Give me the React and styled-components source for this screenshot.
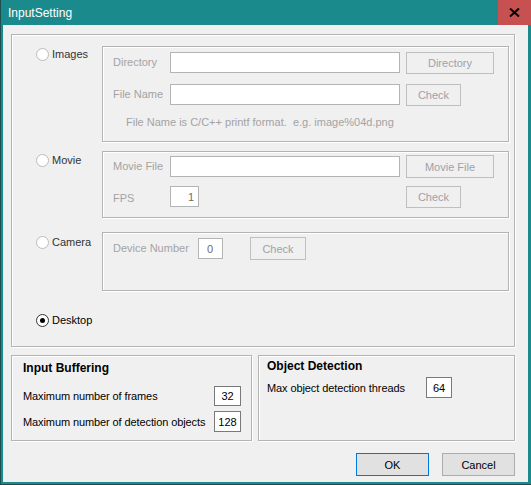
import styled, { createGlobalStyle } from 'styled-components';

const GlobalStyle = createGlobalStyle`
  html, body {
    margin: 0;
    padding: 0;
    background: #f0f0f0;
  }
  body {
    font-family: "Liberation Sans", Arial, sans-serif;
    font-size: 11px;
  }
`;

const Window = styled.div`
  width: 531px;
  height: 485px;
  box-sizing: border-box;
  background: #1b8a8c;
  border-left: 1px solid #1e4f50;
  border-bottom: 1px solid #1e4f50;
  padding: 0 3px 2px 2px;
  display: flex;
  flex-direction: column;
`;

const TitleBar = styled.div`
  height: 25px;
  flex: none;
  display: flex;
  align-items: center;
  justify-content: space-between;
  color: #fff;
  font-size: 12px;
  padding-left: 5px;
  margin-right: -3px;
`;

const CloseButton = styled.div`
  width: 33px;
  height: 25px;
  background: #c75050;
  display: flex;
  align-items: center;
  justify-content: center;
`;

const Body = styled.div`
  flex: 1;
  background: #f0f0f0;
  padding: 9px 13px 0 8px;
  display: flex;
  flex-direction: column;
`;

/* etched group frame, as drawn by the Win32 group box */
const Frame = styled.div`
  box-sizing: border-box;
  border: 1px solid #b4b4b4;
  box-shadow: inset 1px 1px 0 #fff, 1px 1px 0 #fff;
`;

const SourceFrame = styled(Frame)`
  height: 313px;
  padding-bottom: 18px;
  display: flex;
  flex-direction: column;
`;

const SourceRow = styled.div`
  display: flex;
  margin-top: ${(p) => p.$gap}px;
  padding-right: 5px;
`;

const RadioLabel = styled.label`
  width: 90px;
  flex: none;
  box-sizing: border-box;
  padding-left: 24px;
  padding-top: ${(p) => p.$top || 0}px;
  display: flex;
  align-items: flex-start;
  gap: 3px;
  color: ${(p) => (p.$checked ? '#000' : '#333')};
  line-height: 13px;
`;

const RadioDot = styled.span`
  width: 11px;
  height: 11px;
  flex: none;
  border-radius: 50%;
  background: #fff;
  border: 1px solid ${(p) => (p.$checked ? '#333' : '#bcbcbc')};
  display: flex;
  align-items: center;
  justify-content: center;

  &::after {
    content: '';
    width: 5px;
    height: 5px;
    border-radius: 50%;
    background: ${(p) => (p.$checked ? '#000' : 'transparent')};
  }
`;

const SubFrame = styled(Frame)`
  flex: 1;
  height: ${(p) => p.$height}px;
  padding: ${(p) => p.$pad || '4px 0 0 10px'};
  display: flex;
  flex-direction: column;
  gap: ${(p) => p.$gap || 9}px;
`;

const FieldRow = styled.div`
  display: flex;
  align-items: center;
  height: 23px;
`;

const FieldLabel = styled.span`
  width: ${(p) => p.$width || 57}px;
  flex: none;
  color: #a3a3a3;
  padding-top: ${(p) => p.$drop || 0}px;
  margin-top: -1px;
`;

const TextBox = styled.input`
  box-sizing: border-box;
  width: ${(p) => p.$width}px;
  height: ${(p) => p.$height || 21}px;
  margin: 0 ${(p) => p.$after || 0}px 0 0;
  padding: 0 ${(p) => p.$pad ?? 4}px;
  border: 1px solid ${(p) => (p.disabled ? '#b4b4b4' : '#7a7a7a')};
  background: #fff;
  font: inherit;
  color: ${(p) => (p.disabled ? '#6d6d6d' : '#000')};
  text-align: ${(p) => p.$align || 'left'};
  outline: none;
  flex: none;
`;

const PushButton = styled.button`
  box-sizing: border-box;
  width: ${(p) => p.$width}px;
  height: ${(p) => p.$height || 23}px;
  padding: 0;
  font: inherit;
  flex: none;
  border: 1px solid ${(p) => (p.disabled ? '#bfbfbf' : p.$primary ? '#0078d7' : '#adadad')};
  background: ${(p) => (p.disabled ? '#f0f0f0' : '#e1e1e1')};
  color: ${(p) => (p.disabled ? '#a0a0a8' : '#000')};
`;

const Note = styled.div`
  padding-left: 13px;
  margin-top: 1px;
  color: #a3a3a3;
`;

const BottomGroups = styled.div`
  display: flex;
  gap: 6px;
  margin-top: 8px;
  height: 86px;
`;

const OptionFrame = styled(Frame)`
  width: ${(p) => p.$width}px;
  padding: ${(p) => p.$pad};
  display: flex;
  flex-direction: column;
`;

const GroupTitle = styled.div`
  font-weight: bold;
  font-size: 12px;
  color: #000;
  height: 16px;
  margin-bottom: ${(p) => p.$space}px;
`;

const OptionRow = styled.div`
  display: flex;
  align-items: center;
  justify-content: ${(p) => (p.$spread ? 'space-between' : 'flex-start')};
  height: 21px;
  margin-bottom: 5px;
  color: #000;
  white-space: nowrap;
  letter-spacing: -0.1px;
`;

const OptionLabel = styled.span`
  width: ${(p) => p.$width}px;
  flex: none;
`;

const Footer = styled.div`
  display: flex;
  justify-content: flex-end;
  gap: 13px;
  margin-top: 12px;
`;

const CloseGlyph = () => (
  <svg width="11" height="9" viewBox="0 0 11 9">
    <path d="M1 0.5 L10 8.5 M10 0.5 L1 8.5" stroke="#000" strokeWidth="2" />
  </svg>
);

const Radio = ({ label, checked, top }) => (
  <RadioLabel $checked={checked} $top={top}>
    <RadioDot $checked={checked} />
    {label}
  </RadioLabel>
);

export default function App() {
  return (
    <>
      <GlobalStyle />
      <Window>
        <TitleBar>
          InputSetting
          <CloseButton>
            <CloseGlyph />
          </CloseButton>
        </TitleBar>
        <Body>
          <SourceFrame>
            <SourceRow $gap={11}>
              <Radio label="Images" top={2} />
              <SubFrame $height={96}>
                <FieldRow>
                  <FieldLabel $width={57}>Directory</FieldLabel>
                  <TextBox disabled $width={230} $after={6} />
                  <PushButton disabled $width={88} $height={22}>Directory</PushButton>
                </FieldRow>
                <FieldRow>
                  <FieldLabel $width={57}>File Name</FieldLabel>
                  <TextBox disabled $width={230} $after={6} />
                  <PushButton disabled $width={55} $height={22}>Check</PushButton>
                </FieldRow>
                <Note>File Name is C/C++ printf format.&nbsp; e.g. image%04d.png</Note>
              </SubFrame>
            </SourceRow>

            <SourceRow $gap={9}>
              <Radio label="Movie" top={3} />
              <SubFrame $height={67} $pad="3px 0 0 10px" $gap={7}>
                <FieldRow>
                  <FieldLabel $width={57}>Movie File</FieldLabel>
                  <TextBox disabled $width={230} $after={6} />
                  <PushButton disabled $width={88}>Movie File</PushButton>
                </FieldRow>
                <FieldRow>
                  <FieldLabel $width={57} $drop={4}>FPS</FieldLabel>
                  <TextBox disabled $width={29} $after={207} $align="right" defaultValue="1" readOnly />
                  <PushButton disabled $width={55} $height={22}>Check</PushButton>
                </FieldRow>
              </SubFrame>
            </SourceRow>

            <SourceRow $gap={14}>
              <Radio label="Camera" top={4} />
              <SubFrame $height={59} $pad="4px 0 0 10px">
                <FieldRow>
                  <FieldLabel $width={85}>Device Number</FieldLabel>
                  <TextBox disabled $width={25} $after={27} $pad={8} defaultValue="0" readOnly />
                  <PushButton disabled $width={56}>Check</PushButton>
                </FieldRow>
              </SubFrame>
            </SourceRow>

            <SourceRow $gap={23}>
              <Radio label="Desktop" checked />
            </SourceRow>
          </SourceFrame>

          <BottomGroups>
            <OptionFrame $width={241} $pad="5px 10px 0 11px">
              <GroupTitle $space={8}>Input Buffering</GroupTitle>
              <OptionRow $spread>
                Maximum number of frames
                <TextBox $width={27} $height={20} $pad={0} $align="center" defaultValue="32" readOnly />
              </OptionRow>
              <OptionRow $spread>
                Maximum number of detection objects
                <TextBox $width={27} $height={21} $pad={0} $align="center" defaultValue="128" readOnly />
              </OptionRow>
            </OptionFrame>
            <OptionFrame $width={257} $pad="3px 10px 0 8px">
              <GroupTitle $space={2}>Object Detection</GroupTitle>
              <OptionRow>
                <OptionLabel $width={159}>Max object detection threads</OptionLabel>
                <TextBox $width={26} $height={21} $pad={0} $align="center" defaultValue="64" readOnly />
              </OptionRow>
            </OptionFrame>
          </BottomGroups>

          <Footer>
            <PushButton $primary $width={73}>OK</PushButton>
            <PushButton $width={73}>Cancel</PushButton>
          </Footer>
        </Body>
      </Window>
    </>
  );
}
